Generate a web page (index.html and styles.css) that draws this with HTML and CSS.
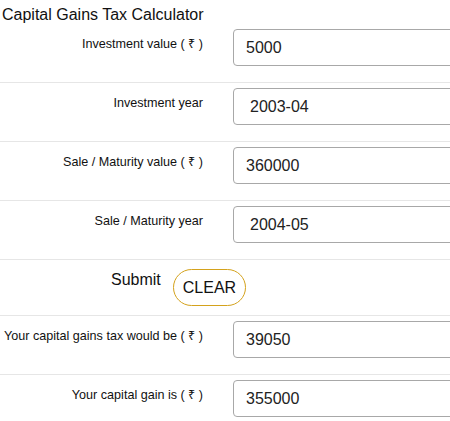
FILE: index.html
```html
<!DOCTYPE html>
<html lang="en">
<head>
  <meta charset="UTF-8">
  <meta name="viewport" content="width=device-width, initial-scale=1.0">
  <title>Capital Gains Tax Calculator</title>
  <link rel="stylesheet" href="styles.css">
</head>
<body>
  <div class="page">
    <h1 class="title">Capital Gains Tax Calculator</h1>

    <form class="calc-form">
      <div class="form-row">
        <label for="investValue">Investment value ( ₹ )</label>
        <input type="text" id="investValue" value="5000">
      </div>

      <div class="form-row">
        <label for="investYear">Investment year</label>
        <div class="year-box" id="investYear">2003-04</div>
      </div>

      <div class="form-row">
        <label for="saleValue">Sale / Maturity value ( ₹ )</label>
        <input type="text" id="saleValue" value="360000">
      </div>

      <div class="form-row">
        <label for="saleYear">Sale / Maturity year</label>
        <div class="year-box" id="saleYear">2004-05</div>
      </div>

      <div class="action-row">
        <button type="button" class="submit-btn">Submit</button>
        <button type="reset" class="clear-btn">CLEAR</button>
      </div>

      <div class="form-row">
        <label for="taxResult">Your capital gains tax would be ( ₹ )</label>
        <input type="text" id="taxResult" value="39050">
      </div>

      <div class="form-row">
        <label for="gainResult">Your capital gain is ( ₹ )</label>
        <input type="text" id="gainResult" value="355000">
      </div>
    </form>
  </div>
</body>
</html>
```

FILE: styles.css
```css
body {
  font-family: "Liberation Sans", Arial, sans-serif;
  margin: 0;
  padding: 0;
  background-color: #fff;
  color: #222;
}

.page {
  width: 450px;
  height: 421px;
  overflow: hidden;
}

.title {
  font-size: 16px;
  font-weight: normal;
  line-height: 18px;
  margin: 6px 0 0 2px;
  color: #111;
}

.calc-form {
  width: 700px;
}

.form-row {
  display: flex;
  align-items: flex-start;
  gap: 30px;
  padding: 5px 0 16px;
  border-bottom: 1px solid #e6e6e6;
}

.form-row label {
  width: 203px;
  flex-shrink: 0;
  text-align: right;
  white-space: nowrap;
  font-size: 12.6px;
  line-height: 15px;
  padding-top: 8px;
  color: #111;
}

.form-row input,
.year-box {
  box-sizing: border-box;
  flex-shrink: 0;
  width: 400px;
  height: 37px;
  border: 1px solid #a8a8a8;
  border-radius: 4px;
  padding: 0 12px;
  font-family: inherit;
  font-size: 16px;
  color: #222;
  background-color: #fff;
}

.year-box {
  padding-left: 16px;
  line-height: 35px;
}

.action-row {
  display: flex;
  align-items: flex-start;
  gap: 12px;
  padding: 9px 0 9px 111px;
  border-bottom: 1px solid #e6e6e6;
}

.submit-btn {
  font-family: inherit;
  font-size: 16px;
  background: none;
  border: none;
  padding: 2px 0 0;
  color: #111;
}

.clear-btn {
  font-family: inherit;
  font-size: 16px;
  height: 37px;
  padding: 0 9px;
  background-color: #fff;
  border: 1px solid #d4a21c;
  border-radius: 19px;
  color: #111;
}
```
